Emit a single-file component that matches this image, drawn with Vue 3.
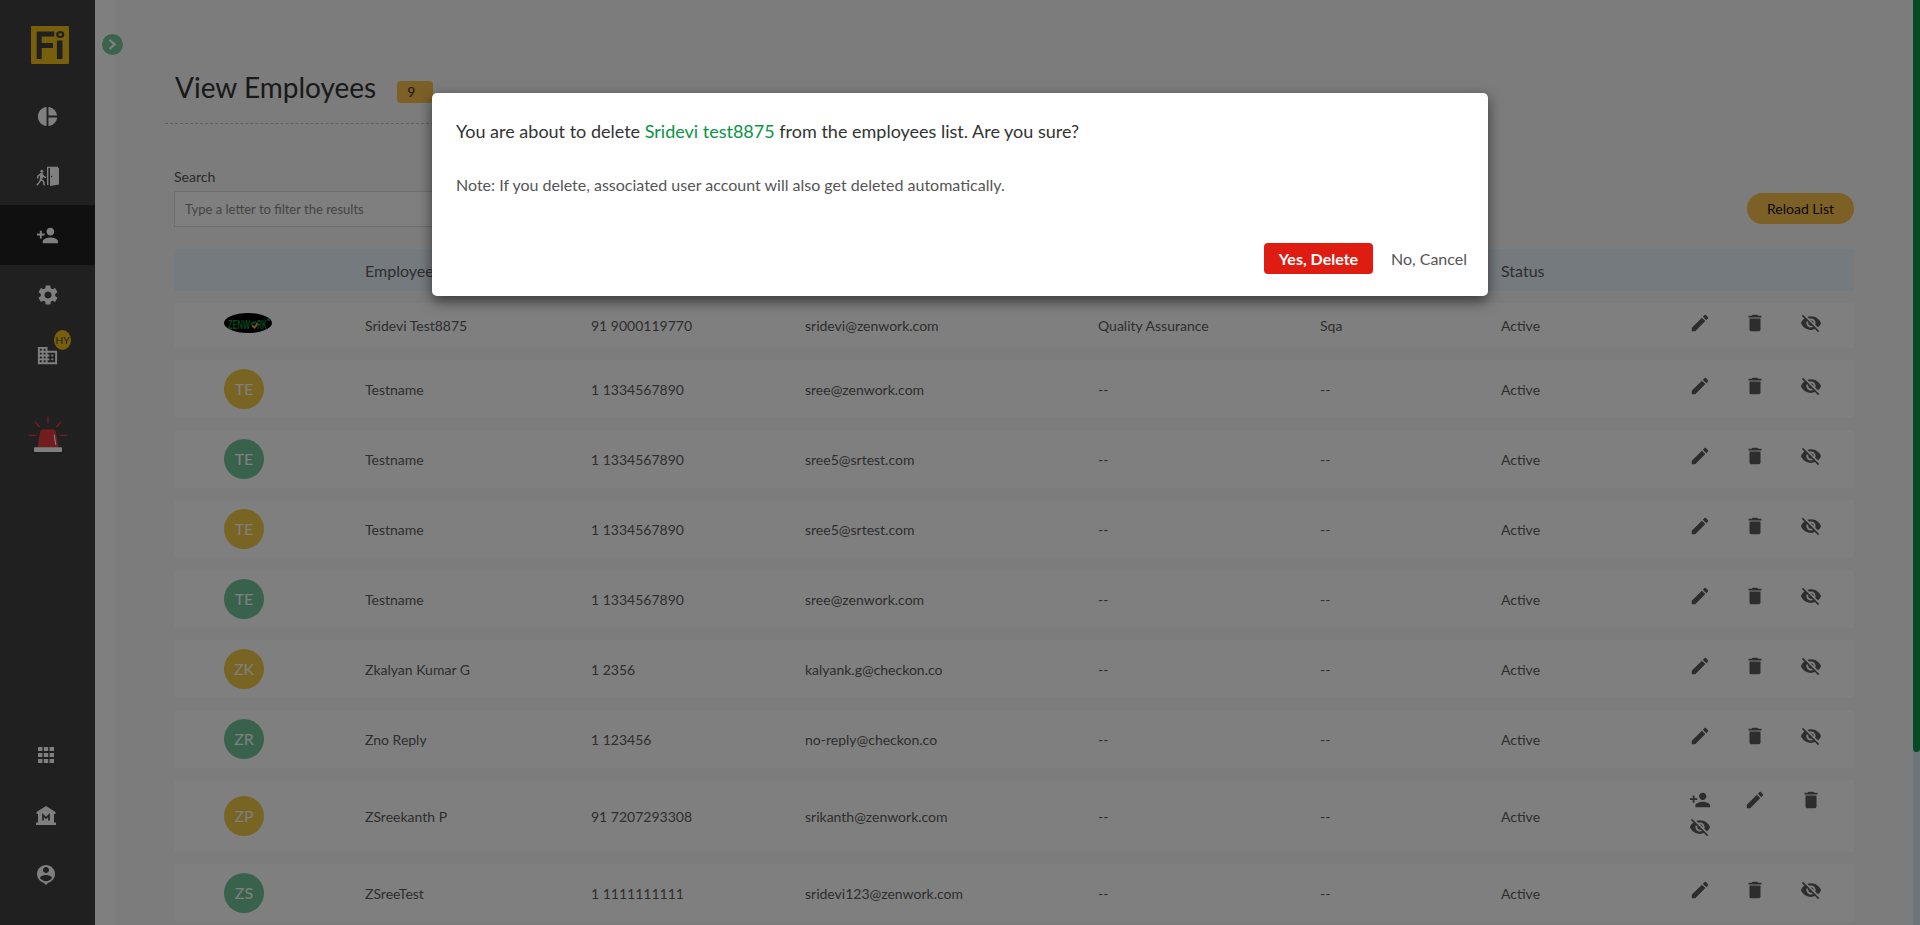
<script setup>
const icons = {
  pie: 'M11 2v20c-5.07-.5-9-4.79-9-10s3.93-9.5 9-10zm2.03 0v8.99H22c-.47-4.74-4.24-8.52-8.97-8.99zm0 11.01V22c4.74-.47 8.5-4.25 8.97-8.99h-8.97z',
  addUser: 'M15 12c2.21 0 4-1.79 4-4s-1.79-4-4-4-4 1.79-4 4 1.79 4 4 4zm-9-2V7H4v3H1v2h3v3h2v-3h3v-2H6zm9 4c-2.67 0-8 1.34-8 4v2h16v-2c0-2.66-5.33-4-8-4z',
  gear: 'M19.14 12.94c.04-.3.06-.61.06-.94 0-.32-.02-.64-.07-.94l2.03-1.58c.18-.14.23-.41.12-.61l-1.92-3.32c-.12-.22-.37-.29-.59-.22l-2.39.96c-.5-.38-1.03-.7-1.62-.94l-.36-2.54c-.04-.24-.24-.41-.48-.41h-3.84c-.24 0-.43.17-.47.41l-.36 2.54c-.59.24-1.13.57-1.62.94l-2.39-.96c-.22-.08-.47 0-.59.22L2.74 8.87c-.12.21-.08.47.12.61l2.03 1.58c-.05.3-.09.63-.09.94s.02.64.07.94l-2.03 1.58c-.18.14-.23.41-.12.61l1.92 3.32c.12.22.37.29.59.22l2.39-.96c.5.38 1.03.7 1.62.94l.36 2.54c.05.24.24.41.48.41h3.84c.24 0 .44-.17.47-.41l.36-2.54c.59-.24 1.13-.56 1.62-.94l2.39.96c.22.08.47 0 .59-.22l1.92-3.32c.12-.22.07-.47-.12-.61l-2.01-1.58zM12 15.6c-1.98 0-3.6-1.62-3.6-3.6s1.62-3.6 3.6-3.6 3.6 1.62 3.6 3.6-1.62 3.6-3.6 3.6z',
  building: 'M12 7V3H2v18h20V7H12zM6 19H4v-2h2v2zm0-4H4v-2h2v2zm0-4H4V9h2v2zm0-4H4V5h2v2zm4 12H8v-2h2v2zm0-4H8v-2h2v2zm0-4H8V9h2v2zm0-4H8V5h2v2zm10 12h-8v-2h2v-2h-2v-2h2v-2h-2V9h8v10zm-2-8h-2v2h2v-2zm0 4h-2v2h2v-2z',
  apps: 'M4 8h4.4V4H4v4zm5.8 12h4.4v-4H9.800v4zM4 20h4.400v-4H4v4zm0-6h4.400v-4H4v4zm5.800 0h4.400v-4H9.800v4zM15.600 4v4H20V4h-4.400zM9.800 8h4.400V4H9.800v4zm5.800 6H20v-4h-4.400v4zm0 6H20v-4h-4.400v4z',
  pin: 'M12 2c-4.970 0-9 4.030-9 9 0 4.170 2.840 7.670 6.690 8.690L12 22l2.310-2.310C18.160 18.670 21 15.170 21 11c0-4.970-4.030-9-9-9zm0 2c1.660 0 3 1.340 3 3s-1.340 3-3 3-3-1.340-3-3 1.340-3 3-3zm0 14.300c-2.500 0-4.710-1.280-6-3.220.03-1.990 4-3.080 6-3.080 1.990 0 5.970 1.090 6 3.080-1.290 1.940-3.500 3.220-6 3.220z',
  edit: 'M3 17.250V21h3.750L17.810 9.940l-3.750-3.750L3 17.250zM20.710 7.040c.39-.39.39-1.020 0-1.410l-2.340-2.340c-.39-.39-1.020-.39-1.410 0l-1.830 1.830 3.750 3.750 1.830-1.830z',
  trash: 'M6 19c0 1.100.9 2 2 2h8c1.100 0 2-.9 2-2V7H6v12zM19 4h-3.500l-1-1h-5l-1 1H5v2h14V4z',
  hide: 'M12 7c2.760 0 5 2.240 5 5 0 .65-.13 1.260-.36 1.830l2.920 2.920c1.510-1.260 2.700-2.890 3.430-4.750-1.730-4.390-6-7.500-11-7.500-1.400 0-2.740.25-3.980.7l2.160 2.160C10.740 7.130 11.350 7 12 7zM2 4.270l2.280 2.280.46.46C3.080 8.300 1.780 10.020 1 12c1.730 4.390 6 7.500 11 7.500 1.550 0 3.030-.3 4.380-.84l.42.42L19.730 22 21 20.730 3.270 3 2 4.270zM7.530 9.800l1.550 1.550c-.05.21-.08.43-.08.65 0 1.660 1.340 3 3 3 .22 0 .44-.03.65-.08l1.550 1.550c-.67.33-1.410.53-2.200.53-2.760 0-5-2.240-5-5 0-.79.2-1.530.53-2.200zm4.310-.78l3.150 3.150.02-.16c0-1.660-1.340-3-3-3l-.17.01z',
}
const std = ['edit', 'trash', 'hide']
const rows = [
  { logo: true, name: 'Sridevi Test8875', phone: '91 9000119770', email: 'sridevi@zenwork.com', dept: 'Quality Assurance', role: 'Sqa', acts: std },
  { av: 'TE', name: 'Testname', phone: '1 1334567890', email: 'sree@zenwork.com', acts: std },
  { av: 'TE', name: 'Testname', phone: '1 1334567890', email: 'sree5@srtest.com', acts: std },
  { av: 'TE', name: 'Testname', phone: '1 1334567890', email: 'sree5@srtest.com', acts: std },
  { av: 'TE', name: 'Testname', phone: '1 1334567890', email: 'sree@zenwork.com', acts: std },
  { av: 'ZK', name: 'Zkalyan Kumar G', phone: '1 2356', email: 'kalyank.g@checkon.co', acts: std },
  { av: 'ZR', name: 'Zno Reply', phone: '1 123456', email: 'no-reply@checkon.co', acts: std },
  { av: 'ZP', name: 'ZSreekanth P', phone: '91 7207293308', email: 'srikanth@zenwork.com', acts: ['addUser', ...std], tall: true },
  { av: 'ZS', name: 'ZSreeTest', phone: '1 1111111111', email: 'sridevi123@zenwork.com', acts: std },
]
</script>

<template>
  <div class="page">
    <aside class="sidebar">
      <svg class="brand" viewBox="0 0 38 38">
        <rect width="38" height="38" rx="1" fill="#f0be1c" />
        <g fill="none" stroke="#404040">
          <path d="M8.200 33V7.900H23.300M8.200 19.500H22" stroke-width="5" />
          <path d="M28.700 14.500V33" stroke-width="5.600" />
          <ellipse cx="29.200" cy="8.600" rx="3" ry="2.400" stroke-width="2.200" />
        </g>
      </svg>
      <nav class="menu">
        <a class="item"><svg class="ic23" viewBox="0 0 24 24"><path :d="icons.pie" /></svg></a>
        <a class="item">
          <svg class="door" viewBox="0 0 23 20">
            <circle cx="5.900" cy="5.300" r="1.500" />
            <path d="M5.300 7.200L4.600 13L7.500 15.300L8.300 19.300M4.700 13.500L3.500 16.200L.8 19.200M5.200 7.900L2.200 9.700L1.500 12.500M6.300 8L7.500 10.500L10 11.500" fill="none" stroke="#fff" stroke-width="1.500" />
            <path d="M4.200 7.300h2.600l.4 5.300H3.900z" />
            <path d="M11.700 19V1.400L22 1.400" fill="none" stroke="#fff" stroke-width="1.400" />
            <path d="M14 1L23 2V18.500L14 20z" />
            <circle cx="15.600" cy="10.500" r=".7" fill="#404040" />
          </svg>
        </a>
        <a class="item active"><svg class="ic23" viewBox="0 0 24 24"><path :d="icons.addUser" /></svg></a>
        <a class="item"><svg class="ic24" viewBox="0 0 24 24"><path :d="icons.gear" /></svg></a>
        <a class="item"><svg class="ic23" viewBox="0 0 24 24"><path :d="icons.building" /></svg><span class="tag">HY</span></a>
        <a class="item alarm">
          <svg viewBox="0 0 40 37">
            <g stroke="#e23a3e" stroke-width="1.300" stroke-linecap="round">
              <path d="M20 1v6M7 6l4.500 4.800M33 6l-4.500 4.800M1 19.300h6.800M32.200 19.300H39" />
            </g>
            <path d="M9.500 31.500L12 16.500Q12.600 13.200 16 13.200H24Q27.400 13.200 28 16.500L30.500 31.500z" fill="#e23a3e" />
            <path d="M26.300 19l1.400 9.500" stroke="#fff" stroke-width="1.200" stroke-linecap="round" />
            <rect x="6" y="31.300" width="28" height="4.700" rx=".8" fill="#fff" />
          </svg>
        </a>
      </nav>
      <nav class="bottom">
        <a class="item"><svg class="ic24" viewBox="0 0 24 24"><path :d="icons.apps" /></svg></a>
        <a class="item">
          <svg class="bank" viewBox="0 0 20 19">
            <path d="M10 0L19.500 6V8H18V16.500H20V19H0V16.500H2V8H.5V6z" />
            <path d="M7 14.500V9L10 12L13 9V14.500" fill="none" stroke="#404040" stroke-width="1.700" />
          </svg>
        </a>
        <a class="item"><svg class="ic24" viewBox="0 0 24 24"><path :d="icons.pin" /></svg></a>
      </nav>
    </aside>
    <div class="gutter">
      <button class="toggle"><svg viewBox="0 0 21 21"><path d="M7.500 5.800L12.700 10.300L7.500 14.900" fill="none" stroke="#fff" stroke-width="2.200" /></svg></button>
    </div>
    <main class="main">
      <header class="head"><h1>View Employees</h1><span class="count">9</span></header>
      <div class="tools">
        <label class="search">Search<input placeholder="Type a letter to filter the results"></label>
        <button class="reload">Reload List</button>
      </div>
      <div class="row thead">
        <span></span><span>Employee Name</span><span>Phone</span><span>Email</span><span>Department</span><span>Designation</span><span>Status</span>
      </div>
      <div v-for="(r, i) in rows" :key="i" class="row" :class="{ first: r.logo, tall: r.tall }">
        <div class="pic">
          <svg v-if="r.logo" class="logo" viewBox="0 0 48 20">
            <ellipse cx="24" cy="10" rx="24" ry="10" />
            <text x="4" y="15.500" textLength="22" lengthAdjust="spacingAndGlyphs">ZENW</text>
            <text x="33" y="15.500" textLength="10" lengthAdjust="spacingAndGlyphs">RK</text>
            <path d="M27 12q2-4 6-2" fill="none" stroke="#0a8a43" stroke-width="2" />
            <path d="M28 12.500l2.500 2 3-4" fill="none" stroke="#e8b52c" stroke-width="2" />
            <circle cx="44.500" cy="6.500" r="1.500" fill="#0a8a43" />
          </svg>
          <span v-else class="avatar" :class="{ green: i % 2 === 0 }">{{ r.av }}</span>
        </div>
        <span>{{ r.name }}</span><span>{{ r.phone }}</span><span>{{ r.email }}</span>
        <span>{{ r.dept || '--' }}</span><span>{{ r.role || '--' }}</span><span>Active</span>
        <div class="acts">
          <svg v-for="a in r.acts" :key="a" viewBox="0 0 24 24"><path :d="icons[a]" /></svg>
        </div>
      </div>
    </main>
    <div class="scroll"><div class="thumb"></div></div>
    <div class="overlay">
      <section class="modal">
        <p class="ask">You are about to delete <b>Sridevi test8875</b> from the employees list. Are you sure?</p>
        <p class="note">Note: If you delete, associated user account will also get deleted automatically.</p>
        <div class="btns"><button class="yes">Yes, Delete</button><button class="no">No, Cancel</button></div>
      </section>
    </div>
  </div>
</template>

<style>
body { overflow: hidden; }
</style>
<style scoped>
* { box-sizing: border-box; }
.page { display: flex; height: 925px; overflow: hidden; position: relative; background: #f8f8f8; font-family: Lato, "Liberation Sans", sans-serif; font-size: 14px; color: #666; }
button { border: 0; padding: 0; font: inherit; }
.sidebar { width: 95px; flex: none; background: #404040; display: flex; flex-direction: column; justify-content: space-between; }
.sidebar svg { fill: #fff; display: block; }
.brand { position: absolute; left: 31px; top: 26px; width: 38px; height: 38px; }
.menu { padding-top: 86px; }
.item { height: 60px; display: flex; align-items: center; justify-content: center; position: relative; }
.item.active { background: #202020; height: 60px; }
.menu .item:nth-child(2) { height: 59px; }
.ic23 { width: 23px; height: 23px; }
.ic24 { width: 24px; height: 24px; }
.door { width: 23px; height: 20px; }
.tag { position: absolute; left: 54px; top: 5px; width: 17px; height: 20px; border-radius: 50%; background: #f0be1c; color: #404040; font-size: 10px; line-height: 21px; text-align: center; display: flex; justify-content: center; }
.alarm { height: 98px; }
.alarm svg { width: 40px; height: 37px; }
.bottom { padding: 0 3px 20px 0; }
.bank { width: 20px; height: 19px; }
.gutter { width: 20px; background: #fff; flex: none; }
.toggle { position: absolute; left: 102px; top: 34px; width: 21px; height: 21px; border-radius: 50%; background: #78c69b; }
.toggle svg { display: block; }
.main { flex: 1; padding: 63px 59px 0; }
.head { display: flex; height: 61px; width: 560px; margin-left: -9px; padding-left: 9px; border-bottom: 1px dashed #c0c0c0; }
h1 { margin: 0; font-size: 28px; font-weight: 400; line-height: 48px; color: #333; padding-left: 1px; }
.count { margin: 18px 0 0 21px; width: 36px; height: 22px; border-radius: 4px; background: #fbc04a; color: #333; padding-left: 10px; line-height: 22px; }
.tools { height: 125px; display: flex; justify-content: space-between; align-items: flex-start; }
.search { display: flex; flex-direction: column; padding-top: 43px; line-height: 20px; color: #555; }
input { width: 380px; height: 36px; margin-top: 4px; padding: 0 10px; border: 1px solid #dcdcdc; background: #fff; font: 13px Lato, sans-serif; }
input::placeholder { color: #888; }
.reload { margin-top: 69px; width: 107px; height: 31px; border-radius: 16px; background: #fbc04a; color: #111; }
.row { display: grid; grid-template-columns: 174px 226px 214px 293px 222px 181px 120px 250px; width: 1680px; height: 58px; margin-bottom: 12px; align-items: center; background: #fff; border-radius: 3px; color: #5c5c5c; }
.row > span { padding-left: 17px; white-space: nowrap; }
.row.thead { height: 42px; background: #eaf5fe; font-size: 16px; }
.row.first { height: 45px; }
.row.tall { height: 72px; }
.pic { padding-left: 50px; }
.avatar { display: block; width: 40px; height: 40px; line-height: 40px; border-radius: 50%; text-align: center; background: #f0c846; color: #fff; font-size: 16px; }
.avatar.green { background: #70c598; }
.logo { display: block; width: 48px; height: 20px; margin-top: -5px; }
.logo text { font: bold 12px "Liberation Sans", sans-serif; fill: #0a8a43; }
.acts { display: grid; grid-template-columns: repeat(3, 55.500px); row-gap: 5px; justify-content: end; justify-items: center; padding-right: 15.500px; margin-top: -6px; }
.acts svg { width: 22px; height: 22px; display: block; fill: #5a5a5a; }
.scroll { width: 7px; background: #dcecf8; flex: none; }
.thumb { height: 752px; background: #0a9444; border-radius: 0 0 4px 4px; }
.overlay { position: absolute; inset: 0; background: rgba(0, 0, 0, .5); }
.modal { margin: 93px 0 0 432px; width: 1056px; height: 203px; padding: 26px 21px 0 24px; border-radius: 5px; background: #fff; box-shadow: 0 5px 14px rgba(0, 0, 0, .55); }
.modal p { margin: 0; }
.ask { font-size: 18px; line-height: 24px; color: #333; }
.ask b { font-weight: 400; color: #0a9444; }
.modal .note { font-size: 16px; line-height: 24px; margin-top: 30px; color: #555; }
.btns { display: flex; justify-content: flex-end; gap: 18px; margin-top: 46px; font-size: 16px; }
.yes { width: 109px; height: 31px; border-radius: 4px; background: #de1c12; color: #fff; font-weight: 700; }
.no { height: 31px; background: none; color: #555; }
</style>
